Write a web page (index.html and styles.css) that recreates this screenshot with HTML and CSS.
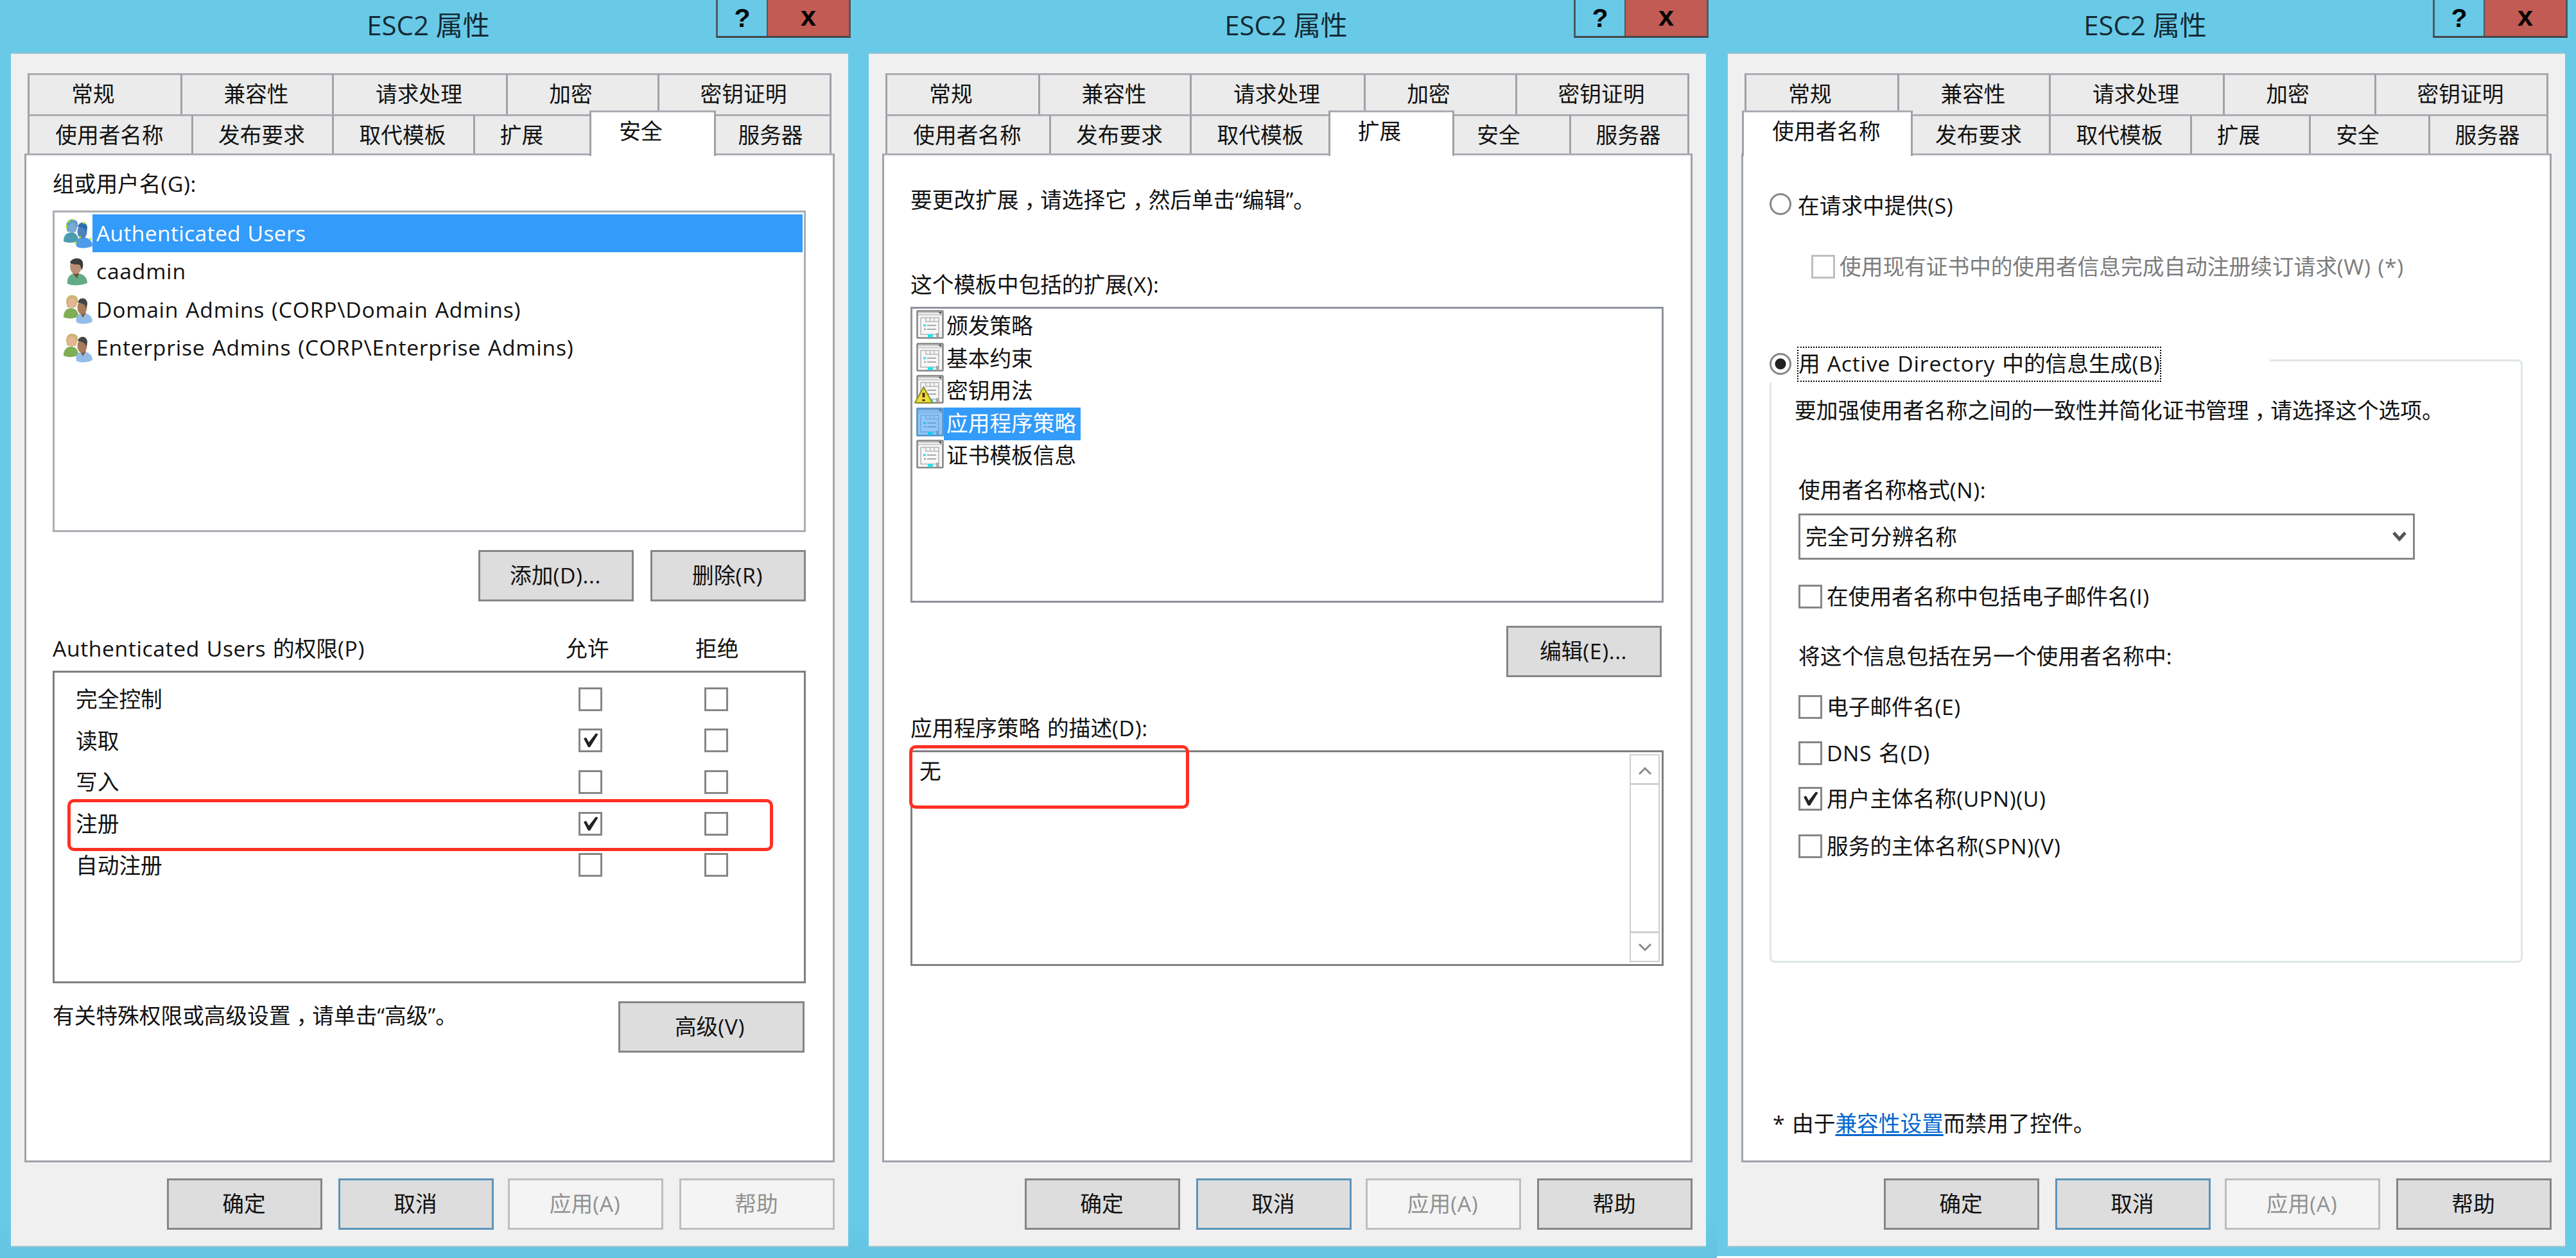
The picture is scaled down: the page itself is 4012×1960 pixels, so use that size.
FILE: index.html
```
<!DOCTYPE html>
<html lang="zh-CN">
<head>
<meta charset="utf-8">
<title>ESC2 属性</title>
<link rel="stylesheet" href="styles.css">
</head>
<body>
<svg class="defs" width="0" height="0" aria-hidden="true">
  <defs>
    <symbol id="check" viewBox="0 0 31 31"><path d="M5 12.500L9 11l4 7.500L24 4.500l3.500 1.500L15 26h-3z" fill="#222"/></symbol>
    <symbol id="user" viewBox="0 0 45 46">
      <path d="M6 42c-1-9 3-14 10-16h7c9 1 14 7 14 15-8 4-23 5-31 1z" fill="#62ab86"/>
      <path d="M14 25h10l-3 9z" fill="#6d4a35"/>
      <ellipse cx="19" cy="15" rx="9" ry="12" fill="#bb8f74"/>
      <path d="M10 9C13 1 28 0 30 9c1 5 0 9-2 12-1-6-2-9-6-9-5 0-9 0-12-3z" fill="#3e3d3d"/>
    </symbol>
    <symbol id="group" viewBox="0 0 45 46">
      <path d="M0 35c0-9 4-13 11-14 7 0 12 4 12 13-6 4-18 4-23 1z" fill="#7fae55"/>
      <path d="M4 12C4 4 9 0 14 1c6 0 9 4 8 10l-3 9H6z" fill="#cdb676"/>
      <ellipse cx="13" cy="13" rx="6" ry="8" fill="#e3b695"/>
      <path d="M20 43c-2-8 2-13 8-14h5c7 1 12 6 12 13-6 4-19 5-25 1z" fill="#93bde8"/>
      <path d="M26 28h9l-5 8z" fill="#7a5238"/>
      <ellipse cx="29" cy="20" rx="7.500" ry="11" fill="#a97a5c"/>
      <path d="M22 12c3-9 14-8 15 1 0 4-1 6-2 8-1-6-5-7-13-9z" fill="#444"/>
    </symbol>
    <symbol id="group-sel" viewBox="0 0 45 46">
      <path d="M0 35c0-9 4-13 11-14 7 0 12 4 12 13-6 4-18 4-23 1z" fill="#4b9cae"/>
      <path d="M4 12C4 4 9 0 14 1c6 0 9 4 8 10l-3 9H6z" fill="#5f9ecb"/>
      <path d="M5 15C4 6 9 1 15 1.500" fill="none" stroke="#a4e023" stroke-width="2.500" stroke-dasharray="6 3"/>
      <ellipse cx="14" cy="14" rx="6" ry="8" fill="#7aa9d4"/>
      <path d="M20 43c-2-8 2-13 8-14h5c7 1 12 6 12 13-6 4-19 5-25 1z" fill="#4d9bea"/>
      <ellipse cx="29" cy="20" rx="7.500" ry="11" fill="#4d82bd"/>
      <path d="M22 12c3-9 14-8 15 1 0 4-1 6-2 8-1-6-5-7-13-9z" fill="#2a6daf"/>
      <path d="M19 39v-4M41 30l2 2M30 6l3 1M24 29l3-1" stroke="#a4e023" stroke-width="3"/>
    </symbol>
    <symbol id="doc" viewBox="0 0 43 45">
      <rect x="1.500" y="1.500" width="40" height="42" rx="1" fill="#f7f7f7" stroke="#858585" stroke-width="2.500"/>
      <path d="M3 4h37M3 7.500h37" stroke="#c9c9c9" stroke-width="2"/>
      <path d="M34 3h5v4z" fill="#555"/>
      <path d="M7 12h8v6h20v-6h-20M7 12v26h24M35 18v24M22 12v5M28 12v5" fill="none" stroke="#c4c4c4" stroke-width="2"/>
      <path d="M17 24h14M17 30h14" stroke="#aaa" stroke-width="2"/>
      <path d="M12 30h3" stroke="#999" stroke-width="2"/>
      <path d="M31 36h4v7h-4z" fill="#a9a9a9"/>
      <path d="M11 22.500h4v3h-4zM18 38h8v4.500h-8z" fill="#1fe4ee"/>
    </symbol>
    <symbol id="doc-warn" viewBox="-3 0 46 45">
      <use href="#doc" x="0" y="0" width="43" height="45"/>
      <path d="M11.500 19L25 43.500H-2z" fill="#e8e23c" stroke="#8f8c28" stroke-width="2"/>
      <path d="M11.500 28v7M11.500 38v3" stroke="#6a2b12" stroke-width="4"/>
    </symbol>
    <symbol id="doc-sel" viewBox="0 0 43 45">
      <use href="#doc" width="43" height="45"/>
      <rect width="43" height="45" fill="#339bfa" opacity=".52"/>
      <path d="M11 22.500h4v3h-4zM18 38h8v4.500h-8z" fill="#1cc9f5"/>
    </symbol>
  </defs>
</svg>

<main class="desktop">

  <section class="dialog">
    <header class="titlebar">
      <h1 class="title">ESC2 属性</h1>
      <div class="caption"><span class="cap help">?</span><span class="cap close">x</span></div>
    </header>
    <div class="frame">
      <nav class="tabs">
        <div class="row upper"><span class="tab short">常规</span><span class="tab">兼容性</span><span class="tab">请求处理</span><span class="tab short">加密</span><span class="tab">密钥证明</span></div>
        <div class="row lower"><span class="tab">使用者名称</span><span class="tab">发布要求</span><span class="tab">取代模板</span><span class="tab short">扩展</span><span class="tab short active">安全</span><span class="tab">服务器</span></div>
      </nav>
      <div class="panel security">
        <div class="line group-label">组或用户名<i>(G):</i></div>
        <ul class="list principals">
          <li class="selected"><svg><use href="#group-sel"/></svg><span><i>Authenticated Users</i></span></li>
          <li><svg><use href="#user"/></svg><span><i>caadmin</i></span></li>
          <li><svg><use href="#group"/></svg><span><i>Domain Admins (CORP\Domain Admins)</i></span></li>
          <li><svg><use href="#group"/></svg><span><i>Enterprise Admins (CORP\Enterprise Admins)</i></span></li>
        </ul>
        <div class="list-actions"><button class="btn">添加<i>(D)...</i></button><button class="btn">删除<i>(R)</i></button></div>
        <div class="line perm-head"><span><i>Authenticated Users </i>的权限<i>(P)</i></span><span>允许</span><span>拒绝</span></div>
        <div class="perms">
          <div class="perm"><span>完全控制</span><b class="box"></b><b class="box"></b></div>
          <div class="perm"><span>读取</span><b class="box"><svg><use href="#check"/></svg></b><b class="box"></b></div>
          <div class="perm"><span>写入</span><b class="box"></b><b class="box"></b></div>
          <div class="perm"><span>注册</span><b class="box"><svg><use href="#check"/></svg></b><b class="box"></b></div>
          <div class="perm"><span>自动注册</span><b class="box"></b><b class="box"></b></div>
          <div class="mark mark-enroll"></div>
        </div>
        <div class="advanced"><span class="line">有关特殊权限或高级设置<span class="comma">，</span>请单击“高级”。</span><button class="btn wide">高级<i>(V)</i></button></div>
      </div>
      <footer class="actions"><button class="btn">确定</button><button class="btn default">取消</button><button class="btn disabled apply">应用<i>(A)</i></button><button class="btn disabled">帮助</button></footer>
    </div>
  </section>

  <section class="dialog">
    <header class="titlebar">
      <h1 class="title">ESC2 属性</h1>
      <div class="caption"><span class="cap help">?</span><span class="cap close">x</span></div>
    </header>
    <div class="frame">
      <nav class="tabs">
        <div class="row upper"><span class="tab short">常规</span><span class="tab">兼容性</span><span class="tab">请求处理</span><span class="tab short">加密</span><span class="tab">密钥证明</span></div>
        <div class="row lower"><span class="tab">使用者名称</span><span class="tab">发布要求</span><span class="tab">取代模板</span><span class="tab short active">扩展</span><span class="tab short">安全</span><span class="tab">服务器</span></div>
      </nav>
      <div class="panel extensions">
        <div class="line hint">要更改扩展<span class="comma">，</span>请选择它<span class="comma">，</span>然后单击“编辑”。</div>
        <div class="line ext-label">这个模板中包括的扩展<i>(X):</i></div>
        <ul class="list exts">
          <li><svg><use href="#doc"/></svg><span>颁发策略</span></li>
          <li><svg><use href="#doc"/></svg><span>基本约束</span></li>
          <li><svg class="warn"><use href="#doc-warn"/></svg><span>密钥用法</span></li>
          <li class="selected"><svg><use href="#doc-sel"/></svg><span>应用程序策略</span></li>
          <li><svg><use href="#doc"/></svg><span>证书模板信息</span></li>
        </ul>
        <button class="btn edit">编辑<i>(E)...</i></button>
        <div class="line desc-label">应用程序策略<i> </i>的描述<i>(D):</i></div>
        <div class="desc">
          <div class="line">无</div>
          <div class="scroll">
            <span><svg viewBox="0 0 22 18"><path d="M2 14l9-9 9 9" fill="none" stroke="#8a8a8a" stroke-width="3"/></svg></span>
            <span><svg viewBox="0 0 22 18"><path d="M2 4l9 9 9-9" fill="none" stroke="#8a8a8a" stroke-width="3"/></svg></span>
          </div>
          <div class="mark mark-none"></div>
        </div>
      </div>
      <footer class="actions"><button class="btn">确定</button><button class="btn default">取消</button><button class="btn disabled apply">应用<i>(A)</i></button><button class="btn">帮助</button></footer>
    </div>
  </section>

  <section class="dialog last">
    <header class="titlebar">
      <h1 class="title">ESC2 属性</h1>
      <div class="caption"><span class="cap help">?</span><span class="cap close">x</span></div>
    </header>
    <div class="frame">
      <nav class="tabs">
        <div class="row upper"><span class="tab short">常规</span><span class="tab">兼容性</span><span class="tab">请求处理</span><span class="tab short">加密</span><span class="tab">密钥证明</span></div>
        <div class="row lower"><span class="tab active">使用者名称</span><span class="tab">发布要求</span><span class="tab">取代模板</span><span class="tab short">扩展</span><span class="tab short">安全</span><span class="tab">服务器</span></div>
      </nav>
      <div class="panel subject">
        <div class="line opt supply"><b class="radio"></b><span>在请求中提供<i>(S)</i></span></div>
        <div class="line opt renew"><b class="box"></b><span>使用现有证书中的使用者信息完成自动注册续订请求<i>(W) (*)</i></span></div>
        <div class="group">
          <div class="legend"><b class="radio on"></b><span class="focus">用<i> Active Directory </i>中的信息生成<i>(B)</i></span></div>
          <div class="line intro">要加强使用者名称之间的一致性并简化证书管理<span class="comma">，</span>请选择这个选项。</div>
          <div class="line format">使用者名称格式<i>(N):</i></div>
          <div class="combo"><span>完全可分辨名称</span><svg viewBox="0 0 22 18"><path d="M2 3l9 10 9-10" fill="none" stroke="#555" stroke-width="5"/></svg></div>
          <div class="line opt o1"><b class="box"></b><span>在使用者名称中包括电子邮件名<i>(I)</i></span></div>
          <div class="line include">将这个信息包括在另一个使用者名称中<i>:</i></div>
          <div class="line opt o2"><b class="box"></b><span>电子邮件名<i>(E)</i></span></div>
          <div class="line opt o3"><b class="box"></b><span><i>DNS </i>名<i>(D)</i></span></div>
          <div class="line opt o4"><b class="box"><svg><use href="#check"/></svg></b><span>用户主体名称<i>(UPN)(U)</i></span></div>
          <div class="line opt o5"><b class="box"></b><span>服务的主体名称<i>(SPN)(V)</i></span></div>
        </div>
        <div class="line note"><i>* </i>由于<a>兼容性设置</a>而禁用了控件。</div>
      </div>
      <footer class="actions"><button class="btn">确定</button><button class="btn default">取消</button><button class="btn disabled apply">应用<i>(A)</i></button><button class="btn">帮助</button></footer>
    </div>
  </section>

</main>
</body>
</html>
```
FILE: styles.css
```
* { box-sizing: border-box; }
body {
  margin: 0;
  background: #fff;
  color: #111;
  font-family: "Open Sans", "Noto Sans CJK SC", sans-serif;
  font-size: 33.7px;
  line-height: 44px;
}
i { font-style: normal; white-space: pre; letter-spacing: 0.6px; word-spacing: 1.5px; }
.defs { position: absolute; }
.desktop { display: grid; grid-template-columns: 1336px 1338px 1338px; align-items: start; height: 1960px; overflow: hidden; }
.dialog { height: 1960px; background: linear-gradient(#69cae8 1900px, #62c4e0); }
.dialog.last { height: 1957px; background: #69cae8; }
.comma { margin: 0 -9px 0 9px; }

/* Title bar */
.titlebar { display: grid; grid-template-columns: 221px 894px 210px; height: 82px; }
.title { grid-column: 2; margin: 0; text-align: center; font-size: 42px; font-weight: 400; line-height: 78px; color: #132a33; width: 892px; }
.caption { display: flex; height: 59px; border: 3px solid #4a5b62; border-top: 0; border-bottom-color: #44484b; }
.cap { text-align: center; color: #000; font-family: "Liberation Sans", sans-serif; font-weight: 700; height: 56px; }
.help { width: 78px; border-right: 2px solid #4a5b62; font-size: 41px; line-height: 56px; }
.close { flex: 1; background: #c15b53; font-size: 43px; line-height: 51px; }

/* Window body */
.frame { display: flex; flex-direction: column; width: 1304px; height: 1861px; margin-left: 17px; padding: 30px 21px 0; background: #f0f0f0; border-top: 2px solid #9fc4d2; border-bottom: 2px solid #a9c6d0; }
.tabs { margin: 0 5px; }
.row { display: grid; }
.upper { grid-template-columns: 238px 236px 271px 236px 271px; height: 64px; }
.lower { grid-template-columns: 255px 219px 220px 185px 186px 187px; height: 61px; }
.tab { text-align: center; padding: 7px 3px 0 0; background: #ebebeb; border-left: 3px solid #a0a1aa; border-top: 3px solid #acacb4; white-space: nowrap; }
.tab:last-child { border-right: 3px solid #a0a1aa; }
.tab.short { padding-right: 37px; }
.tab.active { position: relative; z-index: 1; margin: -6px -7px -4px -4px; background: #fff; border-right: 3px solid #a0a1aa; }
.panel { display: flex; flex-direction: column; height: 1572px; padding: 0 42px 0 41px; background: #fff; border: 3px solid #a0a3ab; border-top-color: #acacb4; }
.line { white-space: nowrap; height: 44px; }
.actions { display: flex; justify-content: flex-end; gap: 25px; margin-top: 25px; }
.apply { margin-left: -3px; }

.btn { width: 242px; height: 80px; padding: 0 2px 3px 0; border: 3px solid #868686; background: #ddd; color: #111; font: inherit; border-radius: 0; white-space: nowrap; }
.btn.default { border-color: #5c94ba; }
.btn.disabled { border-color: #bcbfc1; background: #f4f4f4; color: #919191; }
.btn.wide { width: 290px; margin-right: 2px; padding-right: 5px; }

/* Lists */
.list { list-style: none; margin: 0; border: 3px solid #acaeb5; }
.list li { display: flex; align-items: center; }
.list svg { flex: none; }
.list .selected span { background: #339bfa; color: #fff; }
.principals { height: 501px; padding: 3px 2px 0 14px; margin-top: 20px; }
.principals li { height: 59.3px; }
.principals svg { width: 45px; height: 46px; }
.principals span { flex: 1; height: 59px; line-height: 59px; padding-left: 6px; }
.principals i { letter-spacing: 0.75px; }
.principals .selected i { letter-spacing: 0.3px; }
.exts { height: 461px; padding: 2px 0 0 6px; margin-top: 13px; border-color: #8f939a; }
.exts li { height: 50.5px; align-items: flex-start; }
.exts svg { width: 43px; height: 45px; }
.exts svg.warn { width: 46px; margin-left: -3px; }
.exts span { height: 51px; line-height: 49px; padding: 0 7px 0 4px; }

/* Check boxes and radio buttons */
.box { flex: none; display: block; width: 37px; height: 37px; padding: 0; border: 3px solid #868686; background: #fff; }
.box svg { display: block; width: 31px; height: 31px; }
.radio { flex: none; width: 34px; height: 34px; border: 3px solid #868686; border-radius: 50%; background: #fff; }
.radio.on { background: radial-gradient(circle, #222 0 8px, #fff 9px); }
.mark { position: absolute; border: 5px solid #ff3023; border-radius: 10px; }

/* Security page */
.group-label { margin-top: 22px; }
.list-actions { display: flex; justify-content: flex-end; gap: 26px; margin-top: 28px; }
.perm-head { display: grid; grid-template-columns: 799px 202px auto; margin-top: 51px; }
.perms { position: relative; height: 487px; margin-top: 13px; padding-top: 9px; border: 3px solid #7f7f7f; }
.perm { display: grid; grid-template-columns: 816px 196px auto; align-items: center; height: 64.6px; }
.perm span { padding-left: 33px; }
.mark-enroll { left: 20px; top: 197px; width: 1099px; height: 81px; }
.advanced { display: flex; justify-content: space-between; margin-top: 28px; }

/* Extensions page */
.hint { margin-top: 47px; }
.ext-label { margin-top: 88px; }
.edit { align-self: flex-end; margin: 36px 3px 0 0; }
.desc-label { margin-top: 57px; }
.desc { position: relative; display: flex; justify-content: space-between; height: 336px; margin-top: 13px; border: 3px solid #7f7f7f; padding: 3px 3px 3px 11px; }
.desc .line { margin-top: 4px; }
.scroll { display: flex; flex-direction: column; justify-content: space-between; width: 47px; border: 2px solid #cfcfcf; }
.scroll span { display: grid; place-items: center; height: 46px; }
.scroll span:first-child { border-bottom: 3px solid #cfcfcf; padding-top: 4px; }
.scroll span:last-child { border-top: 3px solid #cfcfcf; }
.scroll svg { width: 22px; height: 18px; }
.mark-none { left: -5px; top: -11px; width: 436px; height: 99px; }

/* Subject name page */
.opt { display: flex; align-items: center; }
.opt span { margin-left: 7px; }
.supply { margin-top: 56px; }
.supply .radio { margin-top: -5px; }
.supply span { margin-left: 10px; }
.renew { margin-top: 51px; padding-left: 65px; color: #7c7c7c; }
.renew .box { border-color: #bcbfc1; }
.group { height: 940px; margin-top: 123px; border: 3px solid #dfe6ea; border-radius: 8px; }
.legend { display: flex; align-items: center; width: 781px; height: 58px; margin: -25px 0 0 -5px; padding-left: 2px; background: #fff; }
.focus { height: 55px; margin-left: 9px; padding: 2px 0 0; border: 2px dotted #000; line-height: 44px; white-space: nowrap; }
.focus i { letter-spacing: 0.8px; }
.intro { margin: 21px 0 0 36px; }
.format { margin: 80px 0 0 42px; }
.combo { display: flex; align-items: center; justify-content: space-between; width: 960px; height: 72px; margin: 15px 0 0 42px; padding: 0 10px 0 8px; border: 3px solid #868686; }
.combo svg { width: 22px; height: 18px; }
.group .opt { padding-left: 42px; }
.o1 { margin-top: 35px; }
.include { margin: 49px 0 0 42px; }
.o2 { margin-top: 35px; }
.o3 { margin-top: 28px; }
.o4 { margin-top: 27px; }
.o5 { margin-top: 30px; }
.note { margin: 228px 0 0 5px; }
.note a { color: #0066cc; text-decoration: underline; text-decoration-thickness: 3px; text-underline-offset: 4px; }
```
